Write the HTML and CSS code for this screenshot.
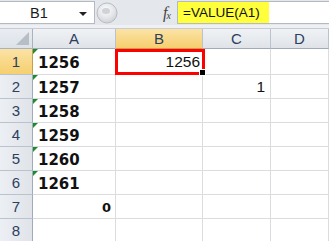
FILE: index.html
```html
<!DOCTYPE html>
<html>
<head>
<meta charset="utf-8">
<link rel="stylesheet" href="styles.css">
</head>
<body>
<div class="fbar">
  <div class="namebox"><span class="ref">B1</span><span class="arrow"></span></div>
  <div class="knob"><svg width="22" height="22" viewBox="0 0 22 22"><defs><radialGradient id="g" cx="0.45" cy="0.35" r="0.7"><stop offset="0" stop-color="#fdfdfd"/><stop offset="0.6" stop-color="#e2e4e7"/><stop offset="1" stop-color="#c9ccd1"/></radialGradient></defs><circle cx="11" cy="11" r="10" fill="url(#g)" stroke="#b9bdc3"/><ellipse cx="10" cy="9" rx="4" ry="3" fill="#cfd2d6"/></svg></div>
  <div class="fxzone"><span class="fx">f<sub>x</sub></span></div>
  <div class="formula"><span class="hl">=VALUE(A1)</span></div>
</div>
<div class="sep"></div>
<div class="grid">
  <div class="corner"><span class="tri"></span></div>
  <div class="ch">A</div>
  <div class="ch sel">B</div>
  <div class="ch">C</div>
  <div class="ch">D</div>

  <div class="rh sel r1">1</div>
  <div class="c a r1"><i class="flag"></i>1256</div>
  <div class="c b r1"><span class="active">1256<i class="handle"></i></span></div>
  <div class="c r1"></div>
  <div class="c r1"></div>

  <div class="rh">2</div>
  <div class="c a"><i class="flag"></i>1257</div>
  <div class="c"></div>
  <div class="c num">1</div>
  <div class="c"></div>

  <div class="rh">3</div>
  <div class="c a"><i class="flag"></i>1258</div>
  <div class="c"></div>
  <div class="c"></div>
  <div class="c"></div>

  <div class="rh">4</div>
  <div class="c a"><i class="flag"></i>1259</div>
  <div class="c"></div>
  <div class="c"></div>
  <div class="c"></div>

  <div class="rh">5</div>
  <div class="c a"><i class="flag"></i>1260</div>
  <div class="c"></div>
  <div class="c"></div>
  <div class="c"></div>

  <div class="rh">6</div>
  <div class="c a"><i class="flag"></i>1261</div>
  <div class="c"></div>
  <div class="c"></div>
  <div class="c"></div>

  <div class="rh">7</div>
  <div class="c zero">0</div>
  <div class="c"></div>
  <div class="c"></div>
  <div class="c"></div>

  <div class="rh">8</div>
  <div class="c"></div>
  <div class="c"></div>
  <div class="c"></div>
  <div class="c"></div>
</div>
</body>
</html>
```
FILE: styles.css
```css
html, body { margin: 0; padding: 0; background: #fff; overflow: hidden; }
body { width: 329px; height: 241px; font-family: "Liberation Sans", Arial, sans-serif; }

.fbar {
  height: 25px;
  background: #e4e7eb;
  display: flex;
  align-items: stretch;
  padding-top: 1px;
  box-sizing: border-box;
}
.namebox {
  width: 95px;
  height: 23px;
  background: #fff;
  border: 1px solid #b5bac1;
  border-left: none;
  box-sizing: border-box;
  display: flex;
  align-items: center;
  position: relative;
}
.ref { font-size: 14.5px; color: #1b1b1b; margin-left: 30px; }
.arrow {
  position: absolute;
  left: 79px; top: 10px;
  width: 0; height: 0;
  border-left: 4px solid transparent;
  border-right: 4px solid transparent;
  border-top: 4px solid #222;
}
.knob { width: 22px; margin-left: 1px; display: flex; align-items: center; }
.fxzone { width: 59px; display: flex; align-items: center; justify-content: flex-end; padding-right: 7px; box-sizing: border-box; }
.fx { font-family: "Liberation Serif", serif; font-style: italic; font-size: 16px; color: #444; letter-spacing: -1px; }
.fx sub { font-size: 10px; vertical-align: -1px; }
.formula {
  flex: 1;
  height: 23px;
  background: #fff;
  border: 1px solid #b5bac1;
  border-right: none;
  box-sizing: border-box;
  display: flex;
  align-items: stretch;
}
.hl {
  background: #ffff3c;
  width: 91px;
  padding-left: 5px;
  box-sizing: border-box;
  font-size: 13.5px;
  color: #111;
  display: flex;
  align-items: center;
}
.sep { height: 4px; background: #eef0f3; border-bottom: 1px solid #c6ccd4; box-sizing: border-box; }

.grid {
  display: grid;
  grid-template-columns: 33px 83px 87px 68px 58px;
  grid-template-rows: 20px 26px repeat(7, 24px);
}
.corner {
  background: linear-gradient(#e9edf2, #dde2e8);
  border-right: 1px solid #a9b3bf;
  border-bottom: 1px solid #a9b3bf;
  position: relative;
}
.tri {
  position: absolute; right: 3px; bottom: 3px;
  width: 0; height: 0;
  border-left: 13px solid transparent;
  border-bottom: 13px solid #b8bec6;
}
.ch {
  background: linear-gradient(#f0f2f5, #dfe3e8);
  border-right: 1px solid #b9c3cf;
  border-bottom: 1px solid #9eabbb;
  color: #2b3f5e;
  font-size: 15px;
  display: flex; align-items: center; justify-content: center;
}
.rh {
  background: linear-gradient(90deg, #eceff3, #e0e4e9);
  border-right: 1px solid #9eabbb;
  border-bottom: 1px solid #b9c3cf;
  color: #2b3f5e;
  font-size: 15px;
  display: flex; align-items: center; justify-content: center;
}
.ch.sel { background: linear-gradient(#fbe3a6, #f6cf6e); border-bottom-color: #c2a052; }
.rh.sel { background: linear-gradient(#fbe3a6, #f6cf6e); border-right-color: #c2a052; }

.c {
  border-right: 1px solid #dadcdd;
  border-bottom: 1px solid #dadcdd;
  position: relative;
  display: flex; align-items: center;
  color: #111;
}
.a {
  font-family: "DejaVu Sans", sans-serif;
  font-weight: bold;
  font-size: 15px;
  padding-left: 5px;
  padding-top: 2px;
}
.flag {
  position: absolute; left: 0; top: 0;
  width: 0; height: 0;
  border-right: 5px solid transparent;
  border-top: 5px solid #1f8a2e;
}
.b { overflow: visible; z-index: 2; }
.active {
  position: absolute; left: -1px; top: 0; right: -3px; bottom: -1px;
  border: 3px solid #ff0000;
  box-sizing: border-box;
  display: flex; align-items: center; justify-content: flex-end;
  padding-right: 2px;
  font-size: 15.5px;
  color: #111;
}
.handle {
  position: absolute; right: -4px; bottom: -4px;
  width: 5px; height: 5px; background: #000; border: 1px solid #fff;
}
.num { justify-content: flex-end; padding-right: 5px; font-size: 15.5px; }
.zero {
  justify-content: flex-end;
  padding-right: 4px;
  font-family: "DejaVu Sans", sans-serif;
  font-weight: bold;
  font-size: 13px;
  padding-top: 2px;
}
```
